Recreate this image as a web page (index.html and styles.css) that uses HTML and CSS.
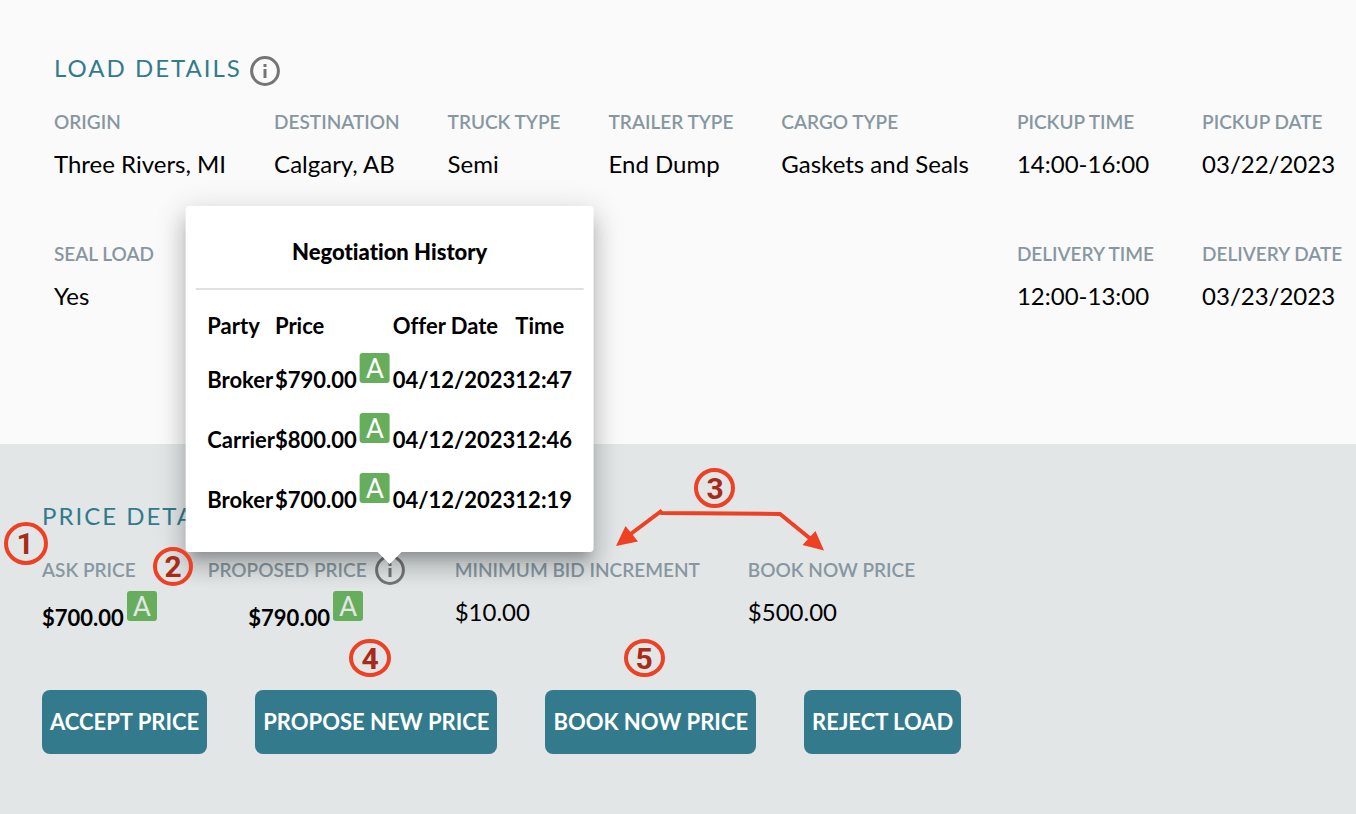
FILE: index.html
```
<!DOCTYPE html>
<html lang="en">
<head>
<meta charset="utf-8">
<title>Load Details</title>
<link rel="stylesheet" href="styles.css">
</head>
<body>
<main class="page">
  <section class="load">
    <header class="section-head">
      <h2 class="section-title">LOAD DETAILS</h2>
      <button class="info" type="button" aria-label="Load information">
        <svg class="info-icon" viewBox="0 0 30 30" aria-hidden="true"><circle cx="15" cy="15" r="13.4"/><path d="M15 13v9M15 8v3"/></svg>
      </button>
    </header>
    <dl class="facts">
      <div class="fact"><dt>ORIGIN</dt><dd>Three Rivers, MI</dd></div>
      <div class="fact"><dt>DESTINATION</dt><dd>Calgary, AB</dd></div>
      <div class="fact"><dt>TRUCK TYPE</dt><dd>Semi</dd></div>
      <div class="fact"><dt>TRAILER TYPE</dt><dd>End Dump</dd></div>
      <div class="fact"><dt>CARGO TYPE</dt><dd>Gaskets and Seals</dd></div>
      <div class="fact"><dt>PICKUP TIME</dt><dd>14:00-16:00</dd></div>
      <div class="fact"><dt>PICKUP DATE</dt><dd>03/22/2023</dd></div>
      <div class="fact"><dt>SEAL LOAD</dt><dd>Yes</dd></div>
      <div class="fact delivery"><dt>DELIVERY TIME</dt><dd>12:00-13:00</dd></div>
      <div class="fact"><dt>DELIVERY DATE</dt><dd>03/23/2023</dd></div>
    </dl>
  </section>

  <section class="price">
    <h2 class="section-title">PRICE DETAILS</h2>
    <dl class="prices">
      <div class="fact">
        <dt>ASK PRICE</dt>
        <dd class="amount">$700.00<span class="auto">A</span></dd>
      </div>
      <div class="fact proposed">
        <dt>PROPOSED PRICE
          <span class="anchor">
            <button class="info" type="button" aria-label="Negotiation history">
              <svg class="info-icon" viewBox="0 0 30 30" aria-hidden="true"><circle cx="15" cy="15" r="13.4"/><path d="M15 13v9M15 8v3"/></svg>
            </button>
            <span class="popover" role="dialog" aria-labelledby="history-title">
              <strong class="popover-title" id="history-title">Negotiation History</strong>
              <table class="history">
                <thead>
                  <tr><th>Party</th><th>Price</th><th>Offer Date</th><th>Time</th></tr>
                </thead>
                <tbody>
                  <tr><td>Broker</td><td>$790.00<span class="auto">A</span></td><td>04/12/2023</td><td>12:47</td></tr>
                  <tr><td>Carrier</td><td>$800.00<span class="auto">A</span></td><td>04/12/2023</td><td>12:46</td></tr>
                  <tr><td>Broker</td><td>$700.00<span class="auto">A</span></td><td>04/12/2023</td><td>12:19</td></tr>
                </tbody>
              </table>
            </span>
          </span>
        </dt>
        <dd class="amount">$790.00<span class="auto">A</span></dd>
      </div>
      <div class="fact"><dt>MINIMUM BID INCREMENT</dt><dd>$10.00</dd></div>
      <div class="fact"><dt>BOOK NOW PRICE</dt><dd>$500.00</dd></div>
    </dl>
    <div class="actions">
      <button class="action" type="button">ACCEPT PRICE</button>
      <button class="action" type="button">PROPOSE NEW PRICE</button>
      <button class="action" type="button">BOOK NOW PRICE</button>
      <button class="action" type="button">REJECT LOAD</button>
    </div>
  </section>

  <svg class="notes" width="860" height="700" viewBox="0 0 860 700">
    <g class="ring">
      <ellipse cx="26" cy="543.5" rx="20" ry="19.5"/>
      <ellipse cx="173" cy="566.5" rx="18" ry="17.5"/>
      <ellipse cx="714.5" cy="488" rx="18.5" ry="18"/>
      <ellipse cx="370" cy="658" rx="19" ry="17"/>
      <ellipse cx="644.5" cy="658" rx="18.5" ry="17"/>
      <path d="M662 510.500L628 536M660.500 513L780 514L812 540"/>
    </g>
    <path class="tip" d="M616 546L625.500 526L638 541.500ZM824 550.500L802.500 545L815.500 531Z"/>
    <g class="digit">
      <text x="25" y="554">1</text>
      <text x="173" y="577">2</text>
      <text x="715" y="499">3</text>
      <text x="370" y="669">4</text>
      <text x="644" y="669">5</text>
    </g>
  </svg>
</main>
</body>
</html>
```
FILE: styles.css
```
* { box-sizing: border-box; }

body {
  margin: 0;
  background: #e2e6e7;
  color: #000;
  font-family: Lato, "Liberation Sans", sans-serif;
  font-size: 24px;
  line-height: 30px;
  font-variant-ligatures: none;
}

.page {
  position: relative;
  min-height: 100vh;
  overflow: hidden;
}

.load {
  min-height: 444px;
  padding: 50px 12px 120px 54px;
  background: #fafafa;
}

.section-head {
  display: flex;
  align-items: center;
  gap: 8px;
}

.section-title {
  margin: 0;
  color: #337b8c;
  font-size: 24px;
  font-weight: 400;
  line-height: 36px;
  letter-spacing: 2px;
}

.info {
  display: block;
  padding: 0;
  border: 0;
  background: none;
}

.section-head .info { margin-top: 6px; }

.info-icon {
  display: block;
  width: 30px;
  height: 30px;
  fill: none;
  stroke: #757575;
  stroke-width: 3;
}

.facts {
  display: grid;
  grid-template-columns: repeat(7, max-content);
  gap: 48px;
  margin: 16px 0 0;
}

.delivery { grid-column: 6; }

.fact dt {
  display: flex;
  align-items: center;
  gap: 8px;
  height: 40px;
  color: #8797a1;
  font-size: 19px;
  font-weight: 600;
  white-space: nowrap;
}

.fact dd {
  margin: 0;
  height: 44px;
  line-height: 44px;
  white-space: nowrap;
}

.price { padding: 54px 42px 60px; }

.prices {
  display: flex;
  gap: 48px;
  margin: 16px 0 0;
}

.fact .amount {
  height: 56px;
  line-height: 56px;
  font-size: 22px;
  font-weight: 700;
}

.proposed .amount { text-align: center; }

.auto {
  display: inline-block;
  width: 30px;
  height: 30px;
  margin: 0 3px;
  border-radius: 3px;
  background: #66ad5c;
  color: #e2e6e7;
  font: 400 28px/31px Roboto, "Liberation Sans", sans-serif;
  text-align: center;
  vertical-align: 10px;
}

.anchor { position: relative; margin-right: 2px; }

.popover {
  position: absolute;
  bottom: 33px;
  left: 50%;
  transform: translateX(-50%);
  padding: 10px 10px 22px;
  border-radius: 4px;
  background: #fff;
  box-shadow: 0 10px 10px -6px rgba(0, 0, 0, .2), 0 16px 20px 2px rgba(0, 0, 0, .14), 0 6px 28px 5px rgba(0, 0, 0, .12);
  color: #000;
  font-size: 22px;
  font-weight: 700;
}

.popover::after {
  content: "";
  position: absolute;
  top: 100%;
  left: 50%;
  margin-left: -12px;
  border: 12px solid transparent;
  border-top-color: #fff;
  border-bottom: 0;
}

.popover-title {
  display: block;
  height: 74px;
  border-bottom: 2px solid #e0e0e0;
  line-height: 72px;
  text-align: center;
}

.history {
  margin: 12px;
  margin-bottom: 0;
  border-collapse: collapse;
}

.history th, .history td {
  height: 60px;
  padding: 0;
  text-align: left;
  vertical-align: baseline;
  line-height: 60px;
}

.history th { height: 48px; line-height: 48px; }

.history .auto { color: #fff; line-height: 31px; }

.actions {
  display: flex;
  flex-wrap: wrap;
  gap: 48px;
  margin-top: 44px;
}

.action {
  height: 64px;
  padding: 0 8px;
  border: 0;
  border-radius: 8px;
  background: #337b8c;
  color: #fff;
  font: 700 22px/30px Lato, "Liberation Sans", sans-serif;
}

.notes {
  position: absolute;
  top: 0;
  left: 0;
  pointer-events: none;
}

.ring { fill: none; stroke: #ee4023; stroke-width: 4; }
.tip { fill: #ee4023; }
.digit { fill: #a92a17; font: 700 30px Roboto, "Liberation Sans", sans-serif; text-anchor: middle; }
```
